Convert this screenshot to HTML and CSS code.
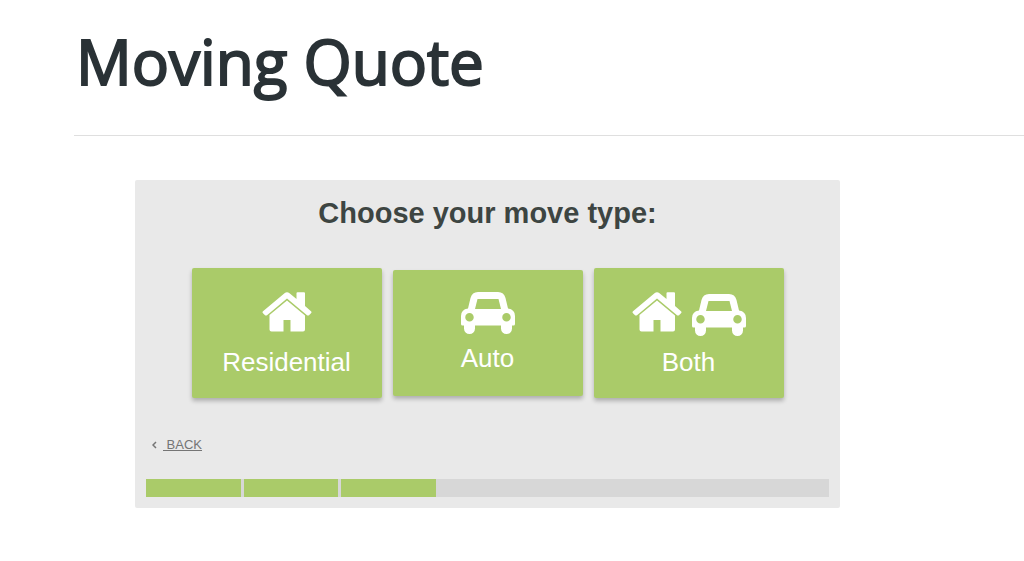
FILE: index.html
```html
<!DOCTYPE html>
<html lang="en">
<head>
<meta charset="utf-8">
<title>Moving Quote</title>
<link rel="stylesheet" href="styles.css">
</head>
<body>
<svg class="sprite" aria-hidden="true">
  <symbol id="house" viewBox="0 0 50 40">
    <path d="M34.500 1.200Q34.500 .2 35.500 .2H42Q43 .2 43 1.200V14L49 19.200Q50 20.200 49 21.200L47 23.200Q46 24 45 23.200L25 6.600 5 23.200Q4 24 3 23.200L1 21.200Q0 20.200 1 19.200L22.500 1.200Q25-.7 27.500 1.200L34.500 7Z"/>
    <path d="M25 8.600 43 23.500V37.500Q43 39.500 41 39.500H28.500V28H21.500V39.500H9.500Q7.500 39.500 7.500 37.500V23Z"/>
  </symbol>
  <symbol id="car" viewBox="0 0 54 42">
    <path fill-rule="evenodd" d="M17 0H37Q43 0 44.500 6L47 16.500Q54 17.500 54 24V32Q54 33.500 52.500 33.500H51V36.500A5.500 5.500 0 0 1 40 36.500V33.500H14V36.500A5.500 5.500 0 0 1 3 36.500V33.500H1.500Q0 33.500 0 32V24Q0 17.500 7 16.500L9.500 6Q11 0 17 0ZM16.500 7 14 17H40L37.500 7ZM8.500 21A4.200 4.200 0 0 0 8.500 29.500A4.200 4.200 0 0 0 8.500 21ZM45.500 21A4.200 4.200 0 0 0 45.500 29.500A4.200 4.200 0 0 0 45.500 21Z"/>
  </symbol>
</svg>
<main class="page">
  <h1 class="title">Moving Quote</h1>
  <section class="quote">
    <h2 class="question">Choose your move type:</h2>
    <div class="choices">
      <button class="choice" type="button">
        <span class="icons"><svg class="house"><use href="#house"/></svg></span>
        <span>Residential</span>
      </button>
      <button class="choice choice-short" type="button">
        <span class="icons"><svg class="car"><use href="#car"/></svg></span>
        <span>Auto</span>
      </button>
      <button class="choice" type="button">
        <span class="icons"><svg class="house"><use href="#house"/></svg><svg class="car"><use href="#car"/></svg></span>
        <span>Both</span>
      </button>
    </div>
    <a class="back" href="#"><svg class="chevron" viewBox="0 0 5 8"><path d="M4 1 1 4 4 7"/></svg><span class="back-text">&nbsp;BACK</span></a>
    <div class="progress" role="progressbar" aria-label="Quote progress" aria-valuemin="0" aria-valuemax="7" aria-valuenow="3">
      <span class="step done"></span><span class="step done"></span><span class="step done"></span>
    </div>
  </section>
</main>
</body>
</html>
```
FILE: styles.css
```css
* { box-sizing: border-box; }
body {
  margin: 0;
  background: #fff;
  font-family: "Liberation Sans", Arial, sans-serif;
}
.sprite { position: absolute; width: 0; height: 0; }
.page { padding: 23px 0 52px 74px; }
.title {
  margin: 0 0 44px;
  padding: 0 2px 35px 2px;
  border-bottom: 1px solid #dfdfdf;
  color: #2a3236;
  font: 400 62px/77px "Open Sans", "Noto Sans", sans-serif;
  -webkit-text-stroke: 2px #2a3236;
}
.quote {
  max-width: 705px;
  margin: 0 61px;
  padding: 16px 11px 11px;
  border-radius: 2px;
  background: #e9e9e9;
}
.question {
  margin: 0 0 38px;
  color: #3d4542;
  font-size: 29px;
  line-height: 34px;
  text-align: center;
}
.choices {
  display: flex;
  align-items: center;
  justify-content: center;
  gap: 11px;
}
.choice {
  display: flex;
  flex-direction: column;
  align-items: center;
  gap: 10px;
  width: 190px;
  padding: 24px 0 21px;
  border: 0;
  border-radius: 2px;
  background: #aacb69;
  box-shadow: 0 3px 4px rgba(0, 0, 0, .25);
  color: #fff;
  font: 26px/30px "Liberation Sans", Arial, sans-serif;
  cursor: pointer;
}
.choice-short { gap: 9px; padding: 22px 0 23px; }
.icons {
  display: flex;
  align-items: flex-start;
  gap: 10px;
  height: 45px;
}
.choice-short .icons { height: 42px; }
.icons svg { fill: currentColor; }
.house { width: 50px; height: 40px; }
.car { width: 54px; height: 42px; }
.house + .car { margin-top: 2px; }
.back {
  display: flex;
  width: max-content;
  align-items: center;
  gap: 6px;
  margin: 39px 0 26px 6px;
  color: #757575;
  font-size: 13px;
  line-height: 16px;
  text-decoration: none;
}
.back-text { text-decoration: underline; }
.chevron {
  width: 5px;
  height: 8px;
  fill: none;
  stroke: currentColor;
  stroke-width: 1.5;
}
.progress {
  display: flex;
  gap: 3px;
  height: 18px;
  background: #d7d7d7;
}
.step { width: calc(100% / 7 - 3px); }
.done { background: #aacb69; }
```
